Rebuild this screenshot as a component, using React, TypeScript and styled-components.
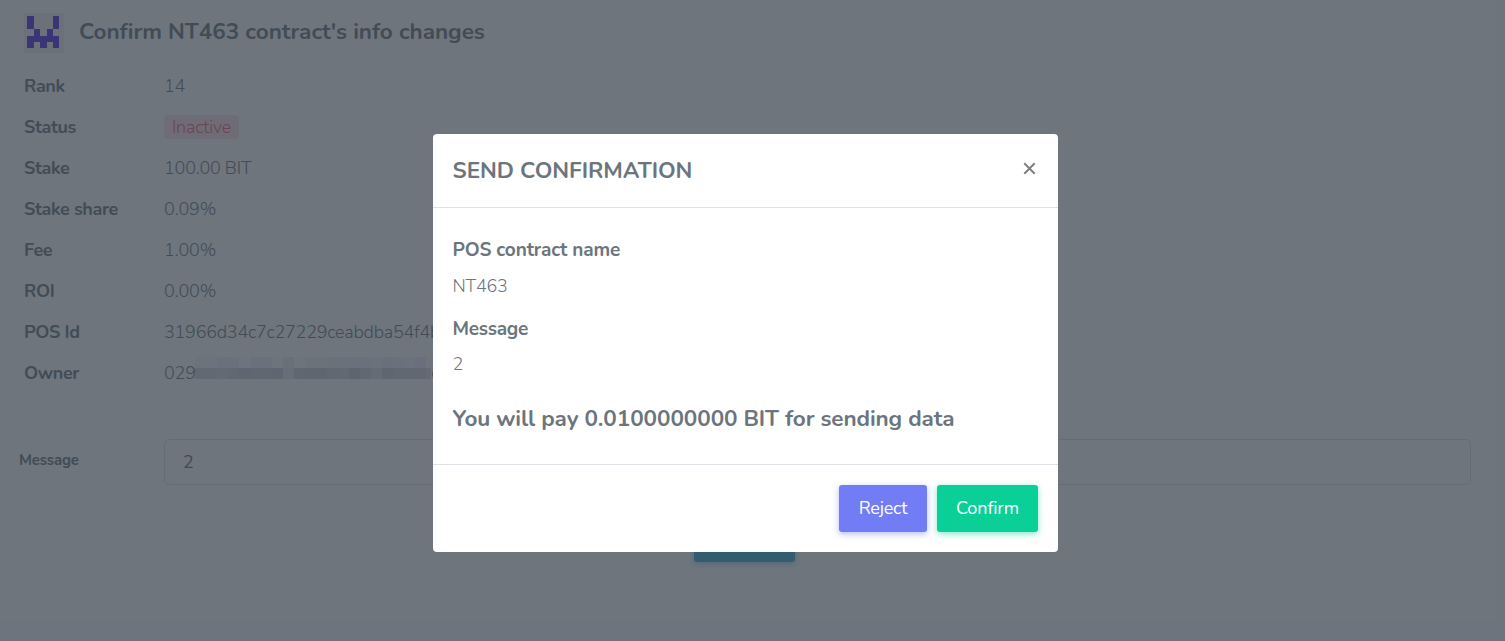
import React from 'react';
import styled, { createGlobalStyle } from 'styled-components';

const GlobalStyle = createGlobalStyle`
  * { box-sizing: border-box; }
  body {
    margin: 0;
    overflow: hidden;
    background: #fafbfe;
    color: #6c757d;
    font-family: Nunito, Lato, 'Noto Sans', sans-serif;
    font-size: 18px;
    font-weight: 400;
  }
`;

const Text = styled.span<{ $track?: number }>`
  letter-spacing: ${(p) => p.$track ?? 0}px;
  white-space: nowrap;
`;

const Page = styled.main`
  height: 641px;
`;

const Card = styled.section`
  display: flex;
  flex-direction: column;
  height: 621px;
  margin-right: 9px;
  padding-top: 13px;
  background: #fff;
`;

const CardHeader = styled.header`
  display: flex;
  align-items: center;
  gap: 15px;
  height: 40px;
  padding-left: 24px;
`;

const Title = styled.h1`
  margin: 0;
  font-size: 22.5px;
  line-height: 38px;
  height: 40px;
  font-weight: 700;
`;

const Rows = styled.dl`
  display: flex;
  flex-direction: column;
  margin: 12px 0 0;
  padding-left: 24px;
`;

const Row = styled.div`
  display: flex;
  align-items: center;
  height: 41px;
`;

const Label = styled.dt`
  width: 140px;
  font-weight: 700;
`;

const Value = styled.dd`
  display: flex;
  align-items: center;
  margin: 0;
  font-weight: 350;
`;

const Badge = styled.span`
  height: 24px;
  width: 75px;
  border-radius: 4px;
  background: rgba(250, 92, 124, 0.18);
  color: #fa5c7c;
  line-height: 24px;
  text-align: center;
`;

const Mosaic = styled.span`
  display: grid;
  grid-template-columns: repeat(22, 11px);
  grid-auto-rows: 11px;
  width: 236px;
  height: 22px;
  margin: -10px 0 0 -0.5px;
  overflow: hidden;
`;

const Tile = styled.i<{ $shade: string }>`
  background: ${(p) => p.$shade};
`;

const Form = styled.div`
  display: flex;
  align-items: center;
  margin-top: 46px;
  padding: 0 25px 0 19px;
`;

const FormLabel = styled.label`
  width: 145px;
  padding-bottom: 4px;
  font-size: 15px;
  font-weight: 700;
`;

const Field = styled.div`
  flex: 1;
  height: 46px;
  padding: 0 18px;
  border: 1px solid #dee2e6;
  border-radius: 5px;
  line-height: 44px;
`;

const Button = styled.button<{ $color: string; $glow: string; $width: number }>`
  width: ${(p) => p.$width}px;
  height: 47px;
  padding: 0 0 1px;
  border: 0;
  border-radius: 3px;
  background: ${(p) => p.$color};
  box-shadow: 0 2px 6px 0 ${(p) => p.$glow};
  color: #fff;
  font: inherit;
  line-height: 45px;
`;

const Submit = styled.div`
  display: flex;
  margin: 30px 0 0 694px;
`;

const Backdrop = styled.div`
  position: fixed;
  inset: 0;
  background: rgba(49, 58, 70, 0.7);
`;

const Dialog = styled.div`
  width: 625px;
  height: 418px;
  margin: 134px 0 0 433px;
  border-radius: 4px;
  background: #fff;
`;

const DialogHeader = styled.div`
  display: flex;
  justify-content: space-between;
  height: 74px;
  padding: 0 21px 0 19.5px;
  border-bottom: 1px solid #dee2e6;
`;

const DialogTitle = styled.h2`
  margin: 0;
  font-size: 22.5px;
  font-weight: 700;
  line-height: 74px;
`;

const Close = styled.svg`
  width: 15px;
  height: 15px;
  margin-top: 27px;
`;

const DialogBody = styled.div`
  height: 256px;
  padding: 26px 19.5px 0;
`;

const Heading = styled.div`
  height: 32px;
  font-size: 19px;
  font-weight: 700;
  line-height: 32px;
`;

const Paragraph = styled.div<{ $line: number }>`
  height: 40px;
  margin-bottom: 7px;
  font-weight: 350;
  line-height: ${(p) => p.$line}px;
`;

const Cost = styled.div`
  margin-top: 16px;
  font-size: 22.5px;
  font-weight: 700;
  line-height: 36px;
`;

const DialogFooter = styled.div`
  display: flex;
  justify-content: flex-end;
  gap: 10px;
  height: 88px;
  padding: 20px;
  border-top: 1px solid #dee2e6;
`;

const topShades = '#f9f9fd #f9f9fd #f3f1fa #f3f1fa #fbfafe #f3f1fa #f3f1fa #fbfafe #efedf6 #fbfafe #f6f4fb #f6f4fb #f2f0f9 #f3f1f9 #f5f2fb #f2f0f9 #f7f5fb #f1eff9 #f5f2fb #f7f5fb #edeafa #fbfafe'.split(' ');
const bottomShades = '#d5d6dd #d5d6dd #d8d9e0 #d2d3da #cccdd5 #cfd0d7 #cfd0d7 #cccdd5 #e5e6ec #cfd0d7 #cbccd4 #cbccd4 #d2d3da #d5d6dd #c9cad2 #d2d3da #dedfe6 #cacbd2 #d1d2d9 #d1d2d9 #d3d4db #dddee5'.split(' ');

const cells = ['10001', '10001', '01010', '11111', '10101'];

const Identicon = () => (
  <svg width="40" height="40" viewBox="0 0 40 40">
    <rect width="40" height="40" fill="#f0f0f0" />
    <g fill="#4f28ea" shapeRendering="crispEdges">
      {cells.map((line, y) =>
        [...line].map((c, x) =>
          c === '1' ? (
            <rect key={`${x}-${y}`} x={3.4 + x * 6.4} y={3.3 + y * 6.4} width="6.4" height="6.4" />
          ) : null,
        ),
      )}
    </g>
  </svg>
);

const rows = [
  { label: 'Rank', value: '14', track: -0.2 },
  { label: 'Status', value: 'Inactive', track: -0.2 },
  { label: 'Stake', value: '100.00 BIT', track: -0.23 },
  { label: 'Stake share', value: '0.09%', track: -0.15 },
  { label: 'Fee', value: '1.00%', track: -0.15 },
  { label: 'ROI', value: '0.00%', track: -0.15 },
  { label: 'POS Id', value: '31966d34c7c27229ceabdba54f4b', track: -0.25 },
  { label: 'Owner', value: '029', track: -0.2 },
];

export default function App() {
  return (
    <Page>
      <GlobalStyle />
      <Card>
        <CardHeader>
          <Identicon />
          <Title><Text $track={-0.02}>Confirm NT463 contract's info changes</Text></Title>
        </CardHeader>
        <Rows>
          {rows.map((r) => (
            <Row key={r.label}>
              <Label><Text $track={-0.37}>{r.label}</Text></Label>
              <Value>
                {r.label === 'Status' ? (
                  <Badge><Text $track={r.track}>{r.value}</Text></Badge>
                ) : (
                  <Text $track={r.track}>{r.value}</Text>
                )}
                {r.label === 'Owner' && (
                  <Mosaic>
                    {[...topShades, ...bottomShades].map((s, i) => <Tile key={i} $shade={s} />)}
                  </Mosaic>
                )}
                {r.label === 'Owner' && <Text>c</Text>}
              </Value>
            </Row>
          ))}
        </Rows>
        <Form>
          <FormLabel><Text $track={-0.2}>Message</Text></FormLabel>
          <Field>2</Field>
        </Form>
        <Submit>
          <Button $color="#39afd1" $glow="rgba(57,175,209,.5)" $width={101} />
        </Submit>
      </Card>
      <Backdrop>
        <Dialog role="dialog">
          <DialogHeader>
            <DialogTitle><Text $track={-0.05}>SEND CONFIRMATION</Text></DialogTitle>
            <Close viewBox="0 0 15 15">
              <path d="M2.3 2.3 12.7 12.7M12.7 2.3 2.3 12.7" stroke="#7f7f7f" strokeWidth="2" fill="none" />
            </Close>
          </DialogHeader>
          <DialogBody>
            <Heading><Text $track={-0.15}>POS contract name</Text></Heading>
            <Paragraph $line={40}><Text $track={-0.25}>NT463</Text></Paragraph>
            <Heading><Text $track={-0.3}>Message</Text></Heading>
            <Paragraph $line={38}>2</Paragraph>
            <Cost><Text $track={-0.09}>You will pay 0.0100000000 BIT for sending data</Text></Cost>
          </DialogBody>
          <DialogFooter>
            <Button $color="#727cf5" $glow="rgba(114,124,245,.5)" $width={88}><Text $track={-0.2}>Reject</Text></Button>
            <Button $color="#0acf97" $glow="rgba(10,207,151,.5)" $width={101}><Text $track={-0.1}>Confirm</Text></Button>
          </DialogFooter>
        </Dialog>
      </Backdrop>
    </Page>
  );
}
